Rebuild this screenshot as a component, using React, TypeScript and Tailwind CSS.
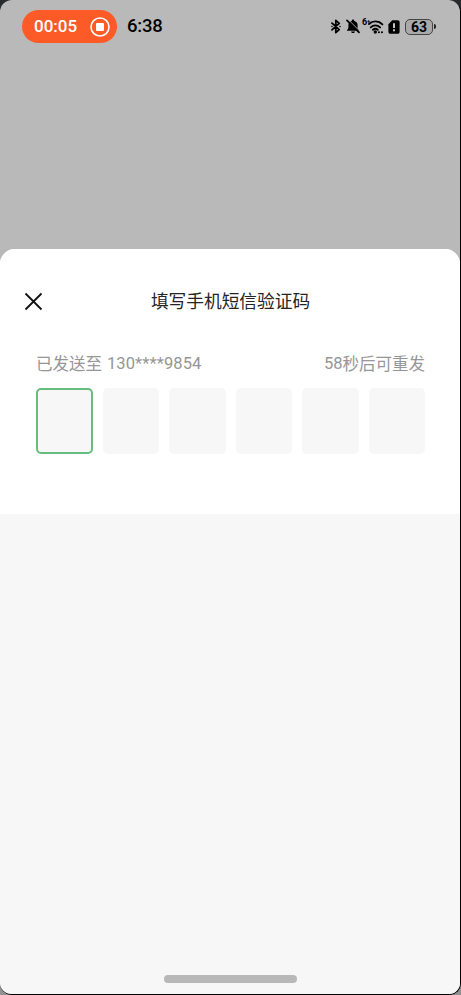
import { useState } from 'react'

const CODE_LENGTH = 6

function BluetoothIcon() {
  return (
    <svg width="10" height="15" viewBox="0 0 10 15" fill="none" stroke="#000" strokeWidth="1.800" strokeLinejoin="round" strokeLinecap="round">
      <path d="M1 4.2 8.2 10.6 4.8 13.6V1.4L8.2 4.4 1 10.8" />
      <path d="M.9 7.5h.2M8.9 7.5h.2" strokeWidth="1.3" />
    </svg>
  )
}

function MutedBellIcon() {
  return (
    <svg width="14" height="15" viewBox="0 0 14 15">
      <path d="M7 .6c.7 0 1.1.5 1.1 1.1 2.2.6 3.500 2.200 3.500 4.400v3l1.600 2.600H.8l1.600-2.600v-3c0-2.200 1.300-3.800 3.500-4.400C5.900 1.100 6.300.6 7 .6Z" />
      <path d="M5 12.400h4c-.3 1-1 1.600-2 1.600s-1.700-.6-2-1.600Z" />
      <path d="M2.100.5 14 12.400" stroke="#b9b9b9" strokeWidth="1" />
      <path d="M1 1.400 13 13.400" stroke="#000" strokeWidth="1.700" strokeLinecap="round" />
    </svg>
  )
}

function WifiIcon() {
  return (
    <svg width="17" height="14" viewBox="0 0 17 14" fill="none" stroke="#000" strokeWidth="1.900" strokeLinecap="round">
      <path d="M2 4C5.600.5 11.600.5 15.400 4.400" />
      <path d="M3.700 7.400c2.700-2.700 6.700-2.700 9.400 0" />
      <path d="M6 9.800c1.500-1.300 3.300-1.300 4.800 0" />
      <circle cx="8.300" cy="12" r="1.700" fill="#000" stroke="none" />
      <path d="M11.900 12.200h.1M14.900 12.200h.1" strokeWidth="2" />
    </svg>
  )
}

function SimAlertIcon() {
  return (
    <svg width="12" height="14" viewBox="0 0 12 14">
      <path d="M4.300.3h5.500c1 0 1.800.8 1.800 1.800v9.800c0 1-.8 1.800-1.800 1.800H2.200c-1 0-1.800-.8-1.800-1.800V4.200Z" />
      <path d="M6 3.300v4.700M6 9.300v2" stroke="#c4c4c4" strokeWidth="2" />
    </svg>
  )
}

function StatusBar() {
  return (
    <div className="flex h-[53px] items-center pl-[22px] pr-6 font-['Roboto','Noto_Sans_CJK_SC',sans-serif]">
      <div className="flex h-[33px] w-[95px] items-center justify-between rounded-full bg-[#fc5b27] pl-3 pr-[7px] text-white">
        <span className="text-[17px] font-medium leading-none">00:05</span>
        <svg width="20" height="20" viewBox="0 0 20 20">
          <circle cx="10" cy="10" r="9" fill="none" stroke="#fff" strokeWidth="1.600" />
          <rect x="6" y="6" width="8" height="8" rx="1" fill="#fff" />
        </svg>
      </div>
      <span className="ml-[10px] text-[18.500px] font-medium leading-none tracking-[-0.200px] text-black">6:38</span>
      <div className="ml-auto flex items-center">
        <BluetoothIcon />
        <div className="ml-[5px]"><MutedBellIcon /></div>
        <div className="relative ml-[7px]">
          <WifiIcon />
          <span className="absolute -left-[5px] -top-[2px] text-[9px] font-bold leading-none">6</span>
          <span className="absolute left-0 -top-[2px] text-[6px] font-bold leading-none">+</span>
        </div>
        <div className="ml-[4px]"><SimAlertIcon /></div>
        <div className="ml-[5px] flex h-4 w-[28px] items-center justify-center rounded-[5px] border-[1.500px] border-[#444] bg-[#a9a9a9] text-[14px] font-bold leading-none text-black">
          63
        </div>
        <div className="ml-px h-[5px] w-[2px] rounded-r-full bg-[#222]" />
      </div>
    </div>
  )
}

export default function App() {
  const [activeIndex, setActiveIndex] = useState(0)

  return (
    <div className="h-[995px] w-[461px] bg-linear-to-b from-[#292a2e] to-[#929292]">
      <div className="flex h-full flex-col overflow-hidden rounded-[12px] border-b border-r border-black bg-[#b9b9b9]">
        <StatusBar />

        <div className="mt-[196px] flex flex-1 flex-col overflow-hidden rounded-t-[15px] bg-[#f7f7f7] font-['Noto_Sans_CJK_SC',sans-serif]">
          <div className="h-[265px] bg-white pl-9 pr-[35px]">
            <div className="relative flex h-[104px] items-center justify-center">
              <button className="absolute -left-[12px] top-[43px]" aria-label="关闭">
                <svg width="19" height="19" viewBox="0 0 19 19" fill="none" stroke="#111" strokeWidth="1.800">
                  <path d="m1.500 1.500 16 16m0-16-16 16" />
                </svg>
              </button>
              <h1 className="pb-[2px] text-[17.700px] leading-6 text-[#242424]">填写手机短信验证码</h1>
            </div>

            <div className="flex h-[22px] items-center justify-between text-[16.500px] leading-[22px] text-[#969696]">
              <p className="flex items-center">
                <span className="pb-[2px]">已发送至</span>
                <span className="ml-[5px] font-['Roboto',sans-serif] tracking-[0.100px]">130****9854</span>
              </p>
              <p className="flex items-center">
                <span className="font-['Roboto',sans-serif]">58</span>
                <span className="pb-[2px]">秒后可重发</span>
              </p>
            </div>

            <div className="mt-[13px] grid grid-cols-6 gap-[10px]">
              {Array.from({ length: CODE_LENGTH }, (_, index) => (
                <div
                  key={index}
                  onClick={() => setActiveIndex(index)}
                  className={`h-[66px] rounded-[5px] bg-[#f7f7f7] ${index === activeIndex ? 'border-2 border-[#67bd7d]' : ''}`}
                />
              ))}
            </div>
          </div>

          <div className="mx-auto mb-[11px] mt-auto h-2 w-[133px] rounded-full bg-[#b8b8b8]" />
        </div>
      </div>
    </div>
  )
}
